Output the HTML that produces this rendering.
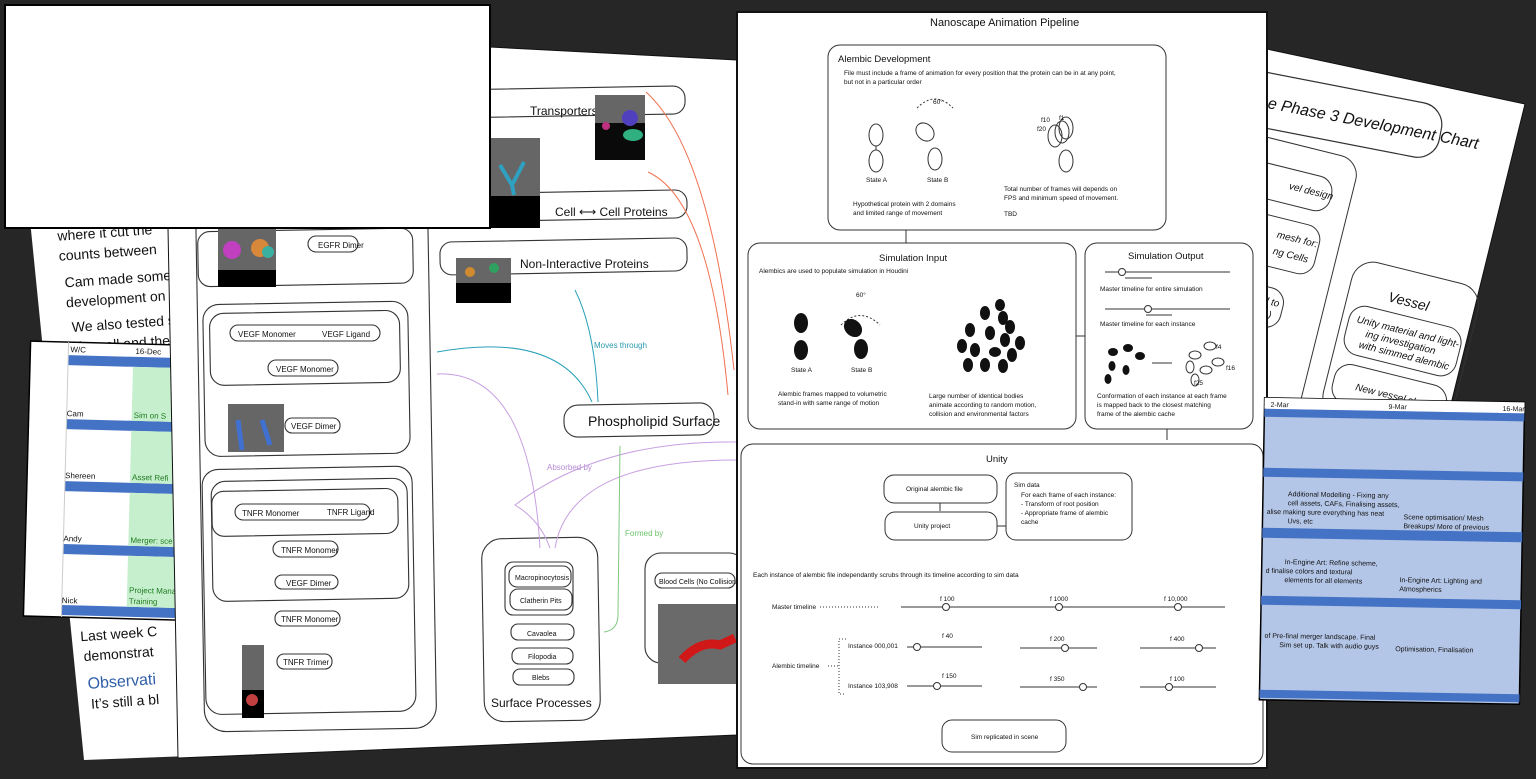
<!DOCTYPE html>
<html><head><meta charset="utf-8"><style>
html,body{margin:0;padding:0;background:#262626;width:1536px;height:779px;overflow:hidden}
svg{display:block}
text{font-family:"Liberation Sans",sans-serif;fill:#111}
</style></head><body>
<svg width="1536" height="779" viewBox="0 0 1536 779" xmlns="http://www.w3.org/2000/svg">
<rect width="1536" height="779" fill="#262626"/>

<!-- Right Phase 3 page -->
<polygon points="1262,48 1525,104 1380,692 1262,692" fill="#fff" stroke="#111"/>
<g transform="rotate(11 1380 130)" fill="none" stroke="#333" stroke-width="1.2">
  <rect x="1230" y="95" width="210" height="55" rx="22"/>
  <text x="1265" y="130" font-size="16" font-style="italic" stroke="none">e Phase 3 Development Chart</text>
</g>
<g transform="rotate(14 1300 300)" fill="none" stroke="#333" stroke-width="1">
  <rect x="1205" y="150" width="120" height="330" rx="20"/>
  <rect x="1215" y="175" width="90" height="35" rx="15"/>
  <text x="1262" y="195" font-size="10" font-style="italic" stroke="none" fill="#111">vel design</text>
  <rect x="1215" y="225" width="90" height="50" rx="15"/>
  <text x="1262" y="245" font-size="10" font-style="italic" stroke="none">mesh for:</text>
  <text x="1262" y="262" font-size="10" font-style="italic" stroke="none">ng Cells</text>
  <rect x="1215" y="295" width="70" height="40" rx="15"/>
  <text x="1262" y="312" font-size="10" font-style="italic" stroke="none">ol to</text>
  <text x="1262" y="325" font-size="10" font-style="italic" stroke="none">ya)</text>
  <rect x="1345" y="245" width="130" height="160" rx="22"/>
  <text x="1385" y="280" font-size="14" font-style="italic" stroke="none">Vessel</text>
  <rect x="1352" y="290" width="115" height="50" rx="16"/>
  <text x="1360" y="308" font-size="10" font-style="italic" stroke="none">Unity material and light-</text>
  <text x="1372" y="320" font-size="10" font-style="italic" stroke="none">ing investigation</text>
  <text x="1368" y="332" font-size="10" font-style="italic" stroke="none">with simmed alembic</text>
  <rect x="1352" y="350" width="115" height="40" rx="16"/>
  <text x="1375" y="374" font-size="10" font-style="italic" stroke="none">New vessel shape</text>
</g>

<!-- Left doc page -->
<polygon points="28,200 480,200 480,745 84,760" fill="#fff"/>
<g transform="rotate(-4 100 300)">
  <text x="62" y="238" font-size="14">where it cut the</text>
  <text x="62" y="258" font-size="14">counts between</text>
  <text x="66" y="285" font-size="14">Cam made some</text>
  <text x="66" y="305" font-size="14">development on</text>
  <text x="70" y="330" font-size="14">We also tested s</text>
  <text x="72" y="350" font-size="14">the cell and the</text>
</g>
<g transform="rotate(-4 100 660)">
  <text x="82" y="640" font-size="14">Last week C</text>
  <text x="84" y="660" font-size="14">demonstrat</text>
  <text x="86" y="688" font-size="16" style="fill:#2f5ea8">Observati</text>
  <text x="88" y="708" font-size="14">It’s still a bl</text>
</g>

<!-- Left blue schedule -->
<g transform="rotate(1.5 100 480)">
  <rect x="27" y="343" width="160" height="275" fill="#fff" stroke="#000" stroke-width="1.5"/>
  <rect x="65" y="356" width="120" height="10" fill="#4472c4"/>
  <rect x="65" y="420" width="120" height="10" fill="#4472c4"/>
  <rect x="65" y="482" width="120" height="10" fill="#4472c4"/>
  <rect x="65" y="545" width="120" height="10" fill="#4472c4"/>
  <rect x="65" y="606" width="120" height="10" fill="#4472c4"/>
  <rect x="130" y="366" width="55" height="54" fill="#c6efce"/>
  <rect x="130" y="430" width="55" height="52" fill="#c6efce"/>
  <rect x="130" y="492" width="55" height="53" fill="#c6efce"/>
  <rect x="130" y="555" width="55" height="51" fill="#c6efce"/>
  <line x1="65" y1="343" x2="65" y2="618" stroke="#ccc"/>
  <g font-size="8">
  <text x="67" y="353">W/C</text><text x="132" y="353">16-Dec</text>
  <text x="65" y="417">Cam</text><text x="132" y="417" style="fill:#1f7a1f">Sim on S</text>
  <text x="65" y="479">Shereen</text><text x="132" y="479" style="fill:#1f7a1f">Asset Refi</text>
  <text x="65" y="542">Andy</text><text x="132" y="542" style="fill:#1f7a1f">Merger: sce</text>
  <text x="65" y="604">Nick</text><text x="132" y="592" style="fill:#1f7a1f">Project Mana</text><text x="132" y="603" style="fill:#1f7a1f">Training</text>
  </g>
</g>

<!-- Middle diagram page -->
<polygon points="168,228 490,47 737,60 737,735 178,758" fill="#fff" stroke="#111"/>
<g fill="none" stroke="#333" stroke-width="1.1">
  <rect x="200" y="190" width="232" height="540" rx="22" transform="rotate(-1 316 460)"/>
  <rect x="198" y="230" width="215" height="55" rx="12" transform="rotate(-1 300 258)"/>
  <rect x="204" y="303" width="205" height="152" rx="16" transform="rotate(-1 300 380)"/>
  <rect x="210" y="312" width="190" height="72" rx="14" transform="rotate(-1 300 350)"/>
  <rect x="204" y="468" width="210" height="245" rx="16" transform="rotate(-1 300 590)"/>
  <rect x="212" y="480" width="196" height="120" rx="14" transform="rotate(-1 300 540)"/>
  <rect x="212" y="490" width="186" height="45" rx="12" transform="rotate(-1 300 512)"/>
  <rect x="230" y="325" width="150" height="16" rx="8"/>
  <rect x="268" y="360" width="70" height="16" rx="8"/>
  <rect x="308" y="236" width="50" height="16" rx="8"/>
  <rect x="285" y="418" width="55" height="15" rx="7"/>
  <rect x="235" y="504" width="135" height="16" rx="8"/>
  <rect x="273" y="541" width="65" height="16" rx="8"/>
  <rect x="275" y="611" width="65" height="15" rx="7"/>
  <rect x="277" y="654" width="55" height="15" rx="7"/>
  <rect x="275" y="575" width="63" height="14" rx="7"/>
  <rect x="440" y="88" width="245" height="28" rx="12" transform="rotate(-1 560 100)"/>
  <rect x="440" y="192" width="247" height="28" rx="12" transform="rotate(-1 560 206)"/>
  <rect x="440" y="240" width="247" height="33" rx="12" transform="rotate(-1 560 256)"/>
  <rect x="564" y="404" width="150" height="32" rx="14" transform="rotate(-1 640 420)"/>
  <rect x="483" y="538" width="116" height="183" rx="20" transform="rotate(-1 540 630)"/>
  <rect x="505" y="562" width="68" height="53" rx="8"/>
  <rect x="509" y="566" width="62" height="21" rx="8"/>
  <rect x="510" y="589" width="62" height="21" rx="8"/>
  <rect x="511" y="624" width="63" height="16" rx="7"/>
  <rect x="512" y="648" width="61" height="16" rx="7"/>
  <rect x="513" y="669" width="61" height="16" rx="7"/>
  <rect x="645" y="553" width="100" height="110" rx="16"/>
  <rect x="655" y="573" width="80" height="15" rx="7"/>
</g>
<g font-size="8">
  <text x="318" y="248">EGFR Dimer</text>
  <text x="238" y="337">VEGF Monomer</text><text x="322" y="337">VEGF Ligand</text>
  <text x="276" y="372">VEGF Monomer</text>
  <text x="291" y="429">VEGF Dimer</text>
  <text x="242" y="516">TNFR Monomer</text><text x="327" y="515">TNFR Ligand</text>
  <text x="281" y="553">TNFR Monomer</text>
  <text x="286" y="586">VEGF Dimer</text>
  <text x="281" y="622">TNFR Monomer</text>
  <text x="283" y="665">TNFR Trimer</text>
  <text x="515" y="580" font-size="7">Macropinocytosis</text>
  <text x="520" y="603" font-size="7">Clatherin Pits</text>
  <text x="527" y="636" font-size="7">Cavaolea</text>
  <text x="528" y="659" font-size="7">Filopodia</text>
  <text x="532" y="680" font-size="7">Blebs</text>
  <text x="659" y="584" font-size="7">Blood Cells (No Collision)</text>
</g>
<text x="530" y="115" font-size="12">Transporters</text>
<text x="555" y="216" font-size="12">Cell ⟷ Cell Proteins</text>
<text x="520" y="268" font-size="12">Non-Interactive Proteins</text>
<text x="588" y="426" font-size="14">Phospholipid Surface</text>
<text x="491" y="707" font-size="12">Surface Processes</text>
<text x="594" y="348" font-size="8" style="fill:#2a9ab0">Moves through</text>
<text x="547" y="470" font-size="8" style="fill:#b48ad6">Absorbed by</text>
<text x="625" y="536" font-size="8" style="fill:#6cc46c">Formed by</text>
<!-- images -->
<rect x="218" y="190" width="58" height="97" fill="#666"/><rect x="218" y="270" width="58" height="17" fill="#000"/>
<circle cx="232" cy="250" r="9" fill="#c040c0"/><circle cx="260" cy="248" r="9" fill="#d9883a"/><circle cx="268" cy="252" r="6" fill="#3ab0a0"/>
<rect x="228" y="404" width="56" height="48" fill="#666"/>
<path d="M238 420 L242 450 M262 420 L270 445" stroke="#4070d0" stroke-width="5"/>
<rect x="242" y="645" width="22" height="45" fill="#666"/><rect x="242" y="690" width="22" height="28" fill="#000"/>
<circle cx="252" cy="700" r="6" fill="#c04040"/>
<rect x="595" y="95" width="50" height="65" fill="#666"/><rect x="595" y="123" width="50" height="37" fill="#0a0a0a"/>
<circle cx="630" cy="118" r="8" fill="#5040c0"/><ellipse cx="633" cy="135" rx="10" ry="6" fill="#30b080"/><circle cx="606" cy="126" r="4" fill="#c03080"/>
<rect x="490" y="138" width="50" height="90" fill="#666"/><rect x="490" y="196" width="50" height="32" fill="#000"/>
<path d="M500 165 L512 185 L524 162 M512 185 L514 195" stroke="#30a0c0" stroke-width="4" fill="none"/>
<rect x="456" y="258" width="55" height="45" fill="#666"/><rect x="456" y="283" width="55" height="20" fill="#000"/>
<circle cx="470" cy="272" r="5" fill="#d08a30"/><circle cx="494" cy="268" r="5" fill="#30a060"/>
<rect x="658" y="604" width="80" height="80" fill="#6a6a6a"/>
<path d="M682 660 Q700 640 720 645 L735 638" stroke="#d01818" stroke-width="9" fill="none"/>
<!-- curves -->
<g fill="none" stroke-width="1">
  <path d="M646 92 Q710 150 734 370" stroke="#f07050"/>
  <path d="M648 172 Q710 200 728 395" stroke="#f07050"/>
  <path d="M575 290 Q595 330 598 402" stroke="#2aa0b8"/>
  <path d="M437 352 Q560 330 592 402" stroke="#2aa0b8"/>
  <path d="M437 374 Q530 370 540 548" stroke="#c8a0e0"/>
  <path d="M737 442 Q600 440 515 505 Q540 520 550 548" stroke="#c8a0e0"/>
  <path d="M737 460 Q570 460 555 548" stroke="#c8a0e0"/>
  <path d="M620 446 L618 615 Q618 630 604 632" stroke="#80c880"/>
</g>

<!-- top-left white box -->
<rect x="5" y="5" width="485" height="223" fill="#fff" stroke="#000" stroke-width="2"/>

<!-- Pipeline page -->
<rect x="737" y="12" width="530" height="756" fill="#fff" stroke="#111" stroke-width="2"/>
<g fill="none" stroke="#333" stroke-width="1">
  <rect x="828" y="45" width="338" height="185" rx="12"/>
  <rect x="748" y="243" width="328" height="186" rx="12"/>
  <rect x="1085" y="243" width="168" height="186" rx="12"/>
  <rect x="741" y="444" width="522" height="320" rx="12"/>
  <rect x="884" y="475" width="113" height="28" rx="10"/>
  <rect x="885" y="512" width="112" height="28" rx="10"/>
  <rect x="1006" y="473" width="126" height="67" rx="10"/>
  <rect x="942" y="720" width="124" height="32" rx="10"/>
  <line x1="906" y1="230" x2="906" y2="243"/>
  <line x1="1076" y1="336" x2="1085" y2="336"/>
  <line x1="1167" y1="429" x2="1167" y2="440"/>
  <line x1="940" y1="503" x2="940" y2="511"/>
  <line x1="997" y1="526" x2="1006" y2="526"/>
  <ellipse cx="876" cy="135" rx="7" ry="11"/><ellipse cx="876" cy="161" rx="7" ry="11"/><line x1="876" y1="146" x2="876" y2="150"/>
  <ellipse cx="925" cy="132" rx="8" ry="10" transform="rotate(-45 925 132)"/><ellipse cx="935" cy="159" rx="7" ry="11"/>
  <path d="M917 108 Q935 90 953 108" stroke-dasharray="2 2"/>
  <ellipse cx="1055" cy="136" rx="7" ry="11"/><ellipse cx="1062" cy="132" rx="7" ry="11"/><ellipse cx="1066" cy="128" rx="7" ry="11"/><ellipse cx="1066" cy="161" rx="7" ry="11"/>
  <path d="M841 325 Q860 306 880 325" stroke-dasharray="2 2"/>
  <line x1="1105" y1="272" x2="1230" y2="272"/><line x1="1105" y1="309" x2="1230" y2="309"/>
  <circle cx="1122" cy="272" r="3.5" fill="#fff"/><circle cx="1148" cy="309" r="3.5" fill="#fff"/>
  <line x1="1125" y1="278" x2="1152" y2="278"/><line x1="1146" y1="315" x2="1172" y2="315"/>
  <line x1="1152" y1="363" x2="1172" y2="363"/>
  <ellipse cx="1195" cy="355" rx="6" ry="4"/><ellipse cx="1210" cy="346" rx="6" ry="4"/><ellipse cx="1190" cy="367" rx="4" ry="6"/><ellipse cx="1206" cy="370" rx="6" ry="4"/><ellipse cx="1195" cy="380" rx="4" ry="6"/><ellipse cx="1218" cy="362" rx="6" ry="4"/>
  <line x1="901" y1="607" x2="1225" y2="607"/>
  <line x1="820" y1="607" x2="880" y2="607" stroke-dasharray="1 2"/>
  <line x1="907" y1="647" x2="982" y2="647"/><line x1="1020" y1="648" x2="1097" y2="648"/><line x1="1140" y1="648" x2="1216" y2="648"/>
  <line x1="907" y1="686" x2="982" y2="686"/><line x1="1020" y1="687" x2="1097" y2="687"/><line x1="1140" y1="687" x2="1216" y2="687"/>
  <path d="M846 639 L839 639 L839 694 L846 694" stroke-dasharray="1 2"/>
  <line x1="828" y1="666" x2="839" y2="666" stroke-dasharray="1 2"/>
</g>
<g fill="#111">
  <ellipse cx="801" cy="323" rx="7" ry="10"/><ellipse cx="801" cy="350" rx="7" ry="10"/>
  <ellipse cx="853" cy="328" rx="8" ry="10" transform="rotate(-45 853 328)"/><ellipse cx="861" cy="349" rx="7" ry="10"/>
  <ellipse cx="985" cy="313" rx="5" ry="7"/><ellipse cx="1003" cy="318" rx="5" ry="7"/><ellipse cx="970" cy="330" rx="5" ry="7"/><ellipse cx="990" cy="333" rx="5" ry="7"/><ellipse cx="1005" cy="340" rx="5" ry="7"/><ellipse cx="975" cy="350" rx="5" ry="7"/><ellipse cx="995" cy="352" rx="6" ry="5"/><ellipse cx="1012" cy="355" rx="5" ry="7"/><ellipse cx="962" cy="346" rx="5" ry="7"/><ellipse cx="985" cy="365" rx="5" ry="7"/><ellipse cx="1003" cy="366" rx="5" ry="7"/><ellipse cx="1020" cy="343" rx="5" ry="7"/><ellipse cx="968" cy="365" rx="5" ry="7"/><ellipse cx="1010" cy="327" rx="5" ry="7"/><ellipse cx="1000" cy="305" rx="5" ry="6"/>
  <ellipse cx="1113" cy="352" rx="5" ry="4"/><ellipse cx="1128" cy="348" rx="5" ry="4"/><ellipse cx="1112" cy="366" rx="3.5" ry="5"/><ellipse cx="1140" cy="356" rx="5" ry="4"/><ellipse cx="1126" cy="370" rx="3.5" ry="5"/><ellipse cx="1108" cy="379" rx="3.5" ry="5"/>
</g>
<g fill="#fff" stroke="#333">
  <circle cx="946" cy="607" r="3.5"/><circle cx="1059" cy="607" r="3.5"/><circle cx="1178" cy="607" r="3.5"/>
  <circle cx="917" cy="647" r="3.5"/><circle cx="1065" cy="648" r="3.5"/><circle cx="1199" cy="648" r="3.5"/>
  <circle cx="937" cy="686" r="3.5"/><circle cx="1083" cy="687" r="3.5"/><circle cx="1169" cy="687" r="3.5"/>
</g>
<text x="930" y="26" font-size="11">Nanoscape Animation Pipeline</text>
<text x="838" y="62" font-size="9.5">Alembic Development</text>
<g font-size="6.5">
<text x="844" y="75">File must include a frame of animation for every position that the protein can be in at any point,</text>
<text x="844" y="84">but not in a particular order</text>
<text x="933" y="104">60°</text>
<text x="866" y="182">State A</text><text x="927" y="182">State B</text>
<text x="1041" y="122">f10</text><text x="1059" y="120">f1</text><text x="1037" y="131">f20</text>
<text x="1004" y="191">Total number of frames will depends on</text>
<text x="1004" y="200">FPS and minimum speed of movement.</text>
<text x="1004" y="216">TBD</text>
<text x="853" y="206">Hypothetical protein with 2 domains</text>
<text x="853" y="215">and limited range of movement</text>
<text x="759" y="273">Alembics are used to populate simulation in Houdini</text>
<text x="856" y="297">60°</text>
<text x="791" y="372">State A</text><text x="851" y="372">State B</text>
<text x="778" y="396">Alembic frames mapped to volumetric</text>
<text x="778" y="405">stand-in with same range of motion</text>
<text x="929" y="398">Large number of identical bodies</text>
<text x="929" y="407">animate according to random motion,</text>
<text x="929" y="416">collision and environmental factors</text>
<text x="1100" y="291">Master timeline for entire simulation</text>
<text x="1100" y="326">Master timeline for each instance</text>
<text x="1216" y="349">f4</text><text x="1226" y="370">f16</text><text x="1194" y="385">f25</text>
<text x="1097" y="398">Conformation of each instance at each frame</text>
<text x="1097" y="407">is mapped back to the closest matching</text>
<text x="1097" y="416">frame of the alembic cache</text>
<text x="906" y="491">Original alembic file</text>
<text x="914" y="528">Unity project</text>
<text x="1014" y="487">Sim data</text>
<text x="1021" y="497">For each frame of each instance:</text>
<text x="1021" y="506">- Transform of root position</text>
<text x="1021" y="515">- Appropriate frame of alembic</text>
<text x="1021" y="524">cache</text>
<text x="753" y="577">Each instance of alembic file independantly scrubs through its timeline according to sim data</text>
<text x="772" y="609">Master timeline</text>
<text x="772" y="668">Alembic timeline</text>
<text x="848" y="648">Instance 000,001</text>
<text x="848" y="688">Instance 103,908</text>
<text x="940" y="601">f 100</text><text x="1050" y="601">f 1000</text><text x="1164" y="601">f 10,000</text>
<text x="942" y="638">f 40</text><text x="1050" y="641">f 200</text><text x="1170" y="641">f 400</text>
<text x="942" y="678">f 150</text><text x="1050" y="681">f 350</text><text x="1170" y="681">f 100</text>
<text x="971" y="739">Sim replicated in scene</text>
</g>
<text x="879" y="261" font-size="9.5">Simulation Input</text>
<text x="1128" y="259" font-size="9.5">Simulation Output</text>
<text x="986" y="462" font-size="9.5">Unity</text>

<!-- Right blue schedule -->
<g transform="rotate(1 1390 550)">
  <rect x="1262" y="400" width="260" height="302" fill="#b4c6e7" stroke="#000" stroke-width="1.5"/>
  <rect x="1262" y="400" width="260" height="11" fill="#fff"/>
  <rect x="1262" y="411" width="260" height="8" fill="#4472c4"/>
  <rect x="1262" y="470" width="260" height="9" fill="#4472c4"/>
  <rect x="1262" y="530" width="260" height="10" fill="#4472c4"/>
  <rect x="1262" y="598" width="260" height="9" fill="#4472c4"/>
  <rect x="1262" y="692" width="260" height="8" fill="#4472c4"/>
  <g font-size="7">
  <text x="1268" y="409">2-Mar</text><text x="1386" y="409">9-Mar</text><text x="1500" y="409">16-Mar</text>
  <text x="1287" y="498">Additional Modelling - Fixing any</text>
  <text x="1287" y="507">cell assets, CAFs, Finalising assets,</text>
  <text x="1266" y="516">alise  making sure everything has neat</text>
  <text x="1287" y="525">Uvs, etc</text>
  <text x="1403" y="519">Scene optimisation/ Mesh</text>
  <text x="1403" y="528">Breakups/ More of previous</text>
  <text x="1285" y="566">In-Engine Art: Refine scheme,</text>
  <text x="1266" y="575">d     finalise colors and textural</text>
  <text x="1285" y="584">elements for all elements</text>
  <text x="1400" y="582">In-Engine Art: Lighting and</text>
  <text x="1400" y="591">Atmospherics</text>
  <text x="1266" y="640">of  Pre-final merger landscape. Final</text>
  <text x="1281" y="649">Sim set up. Talk with audio guys</text>
  <text x="1397" y="651">Optimisation, Finalisation</text>
  </g>
</g>
</svg>
</body></html>
